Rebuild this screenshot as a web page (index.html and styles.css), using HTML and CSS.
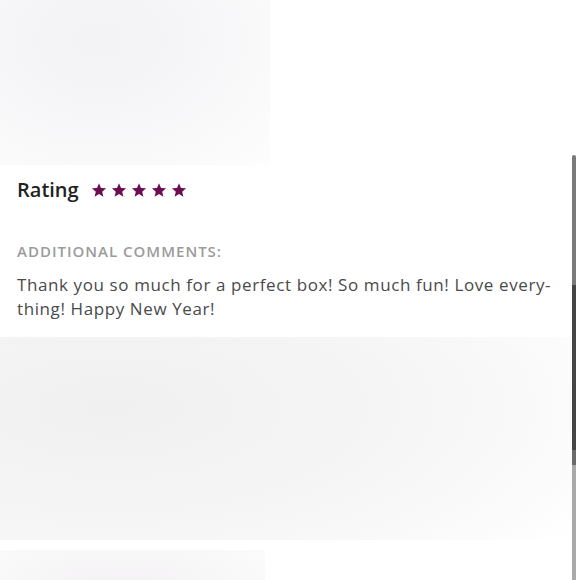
FILE: index.html
```html
<!DOCTYPE html>
<html>
<head>
    <title>Review</title>
    <link rel="stylesheet" href="styles.css">
</head>
<body>
    <div class="page">
        <div class="blur-top"></div>

        <div class="review">
            <div class="rating">
                <span class="rating-label">Rating</span>
                <span class="stars">
                    <svg viewBox="0 0 24 24"><path d="M12 1.8l3 7.1 7.6.6-5.8 5 1.8 7.5L12 18l-6.6 4 1.8-7.5-5.8-5 7.6-.6z"/></svg>
                    <svg viewBox="0 0 24 24"><path d="M12 1.8l3 7.1 7.6.6-5.8 5 1.8 7.5L12 18l-6.6 4 1.8-7.5-5.8-5 7.6-.6z"/></svg>
                    <svg viewBox="0 0 24 24"><path d="M12 1.8l3 7.1 7.6.6-5.8 5 1.8 7.5L12 18l-6.6 4 1.8-7.5-5.8-5 7.6-.6z"/></svg>
                    <svg viewBox="0 0 24 24"><path d="M12 1.8l3 7.1 7.6.6-5.8 5 1.8 7.5L12 18l-6.6 4 1.8-7.5-5.8-5 7.6-.6z"/></svg>
                    <svg viewBox="0 0 24 24"><path d="M12 1.8l3 7.1 7.6.6-5.8 5 1.8 7.5L12 18l-6.6 4 1.8-7.5-5.8-5 7.6-.6z"/></svg>
                </span>
            </div>

            <h3 class="comments-title">Additional comments:</h3>
            <p class="comments">Thank you so much for a perfect box! So much fun! Love every-<br>thing! Happy New Year!</p>
        </div>

        <div class="blur-wide"></div>
        <div class="blur-bottom"></div>

        <div class="scrollbar"></div>
    </div>
</body>
</html>
```

FILE: styles.css
```css
body {
    margin: 0;
    background: #fff;
    font-family: "Open Sans", Lato, sans-serif;
}
.page {
    position: relative;
    width: 580px;
    height: 580px;
    overflow: hidden;
}
.blur-top {
    height: 165px;
    width: 270px;
    background: radial-gradient(ellipse 230px 170px at 100px 40px, #f2f1f3 0%, #f6f5f7 40%, #fbfafb 80%, #fdfdfd 100%);
}
.review {
    height: 172px;
    padding: 0 17px;
    box-sizing: border-box;
    background: #fff;
}
.rating {
    display: flex;
    align-items: center;
    padding-top: 12px;
    height: 25px;
}
.rating-label {
    font-size: 20px;
    font-weight: 600;
    color: #222;
    margin-right: 12px;
}
.stars {
    display: flex;
    gap: 4px;
}
.stars svg {
    width: 16px;
    height: 16px;
    fill: #6c0c52;
}
.comments-title {
    margin: 39px 0 0;
    font-size: 15px;
    font-weight: 600;
    text-transform: uppercase;
    letter-spacing: 1px;
    color: #9b9b9b;
}
.comments {
    margin: 12px 0 0;
    font-size: 17px;
    line-height: 24px;
    letter-spacing: 0.6px;
    color: #4a4a4a;
}
.blur-wide {
    height: 203px;
    width: 573px;
    background: radial-gradient(ellipse 560px 230px at 110px 70px, #f1f0f1 0%, #f4f4f4 40%, #f9f9f9 75%, #fff 100%);
}
.blur-bottom {
    margin-top: 10px;
    height: 30px;
    width: 265px;
    background: radial-gradient(ellipse 200px 80px at 120px 40px, #f4f2f4 0%, #faf9fa 70%, #fdfdfd 100%);
}
.scrollbar {
    position: absolute;
    top: 155px;
    right: 4px;
    width: 4px;
    height: 425px;
    border-radius: 2px 2px 0 0;
    background: linear-gradient(#7a7a7a 0, #7a7a7a 130px, #454545 130px, #454545 295px, #6a6a6a 295px, #6a6a6a 310px, #a9a9a9 310px);
}
```
